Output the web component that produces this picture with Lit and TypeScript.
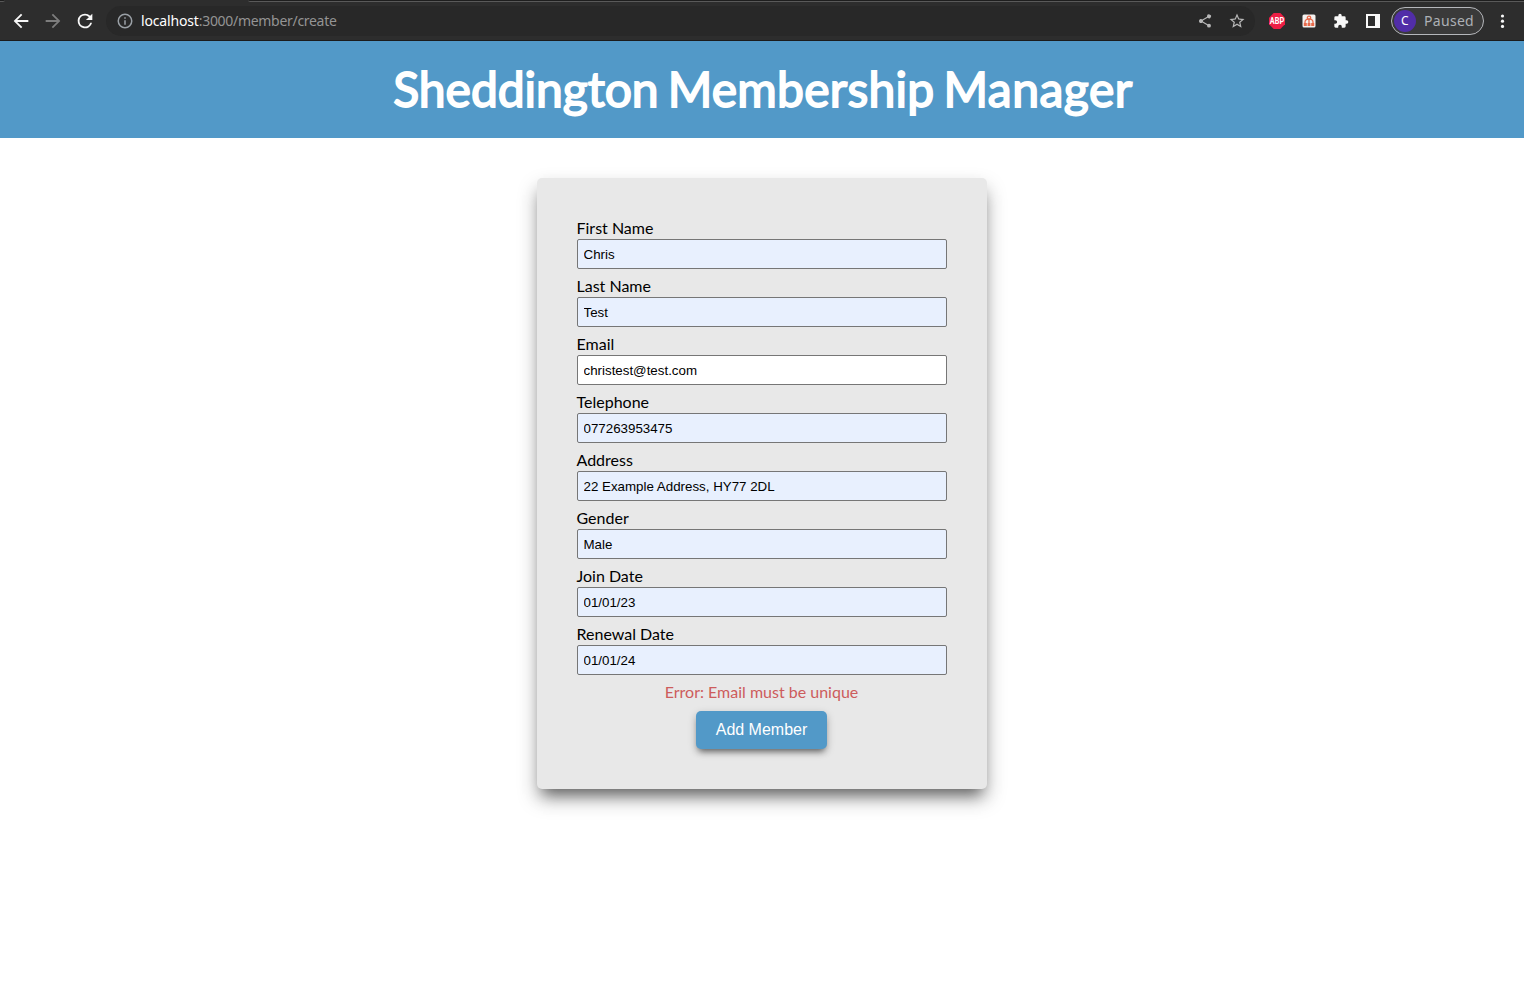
import { LitElement, html, css, svg } from "lit";
import { customElement } from "lit/decorators.js";

const FIELDS = [
  { label: "First Name", value: "Chris", filled: true },
  { label: "Last Name", value: "Test", filled: true },
  { label: "Email", value: "christest@test.com", filled: false },
  { label: "Telephone", value: "077263953475", filled: true },
  { label: "Address", value: "22 Example Address, HY77 2DL", filled: true },
  { label: "Gender", value: "Male", filled: true },
  { label: "Join Date", value: "01/01/23", filled: true },
  { label: "Renewal Date", value: "01/01/24", filled: true },
];

const PATHS = {
  back: "M20 11H7.83l5.59-5.59L12 4l-8 8 8 8 1.41-1.41L7.83 13H20v-2z",
  forward: "M12 4l-1.41 1.41L16.17 11H4v2h12.17l-5.58 5.59L12 20l8-8z",
  reload:
    "M17.65 6.35A7.96 7.96 0 0 0 12 4a8 8 0 1 0 7.73 10h-2.08A6 6 0 1 1 12 6c1.66 0 3.14.69 4.22 1.78L13 11h7V4l-2.35 2.35z",
  info: "M11 7h2v2h-2zm0 4h2v6h-2zm1-9a10 10 0 1 0 0 20 10 10 0 0 0 0-20zm0 18a8 8 0 1 1 0-16 8 8 0 0 1 0 16z",
  share:
    "M18 16.08c-.76 0-1.44.3-1.96.77L8.91 12.7a3.3 3.3 0 0 0 0-1.4l7.05-4.11A3 3 0 1 0 15 5c0 .24.04.47.09.7L8.04 9.81A3 3 0 1 0 6 15c.79 0 1.5-.31 2.04-.81l7.12 4.16c-.05.21-.08.43-.08.65a2.92 2.92 0 1 0 2.92-2.92z",
  star: "M22 9.24l-7.19-.62L12 2 9.19 8.63 2 9.24l5.46 4.73L5.82 21 12 17.27 18.18 21l-1.63-7.03L22 9.24zM12 15.4l-3.76 2.27 1-4.28-3.32-2.88 4.38-.38L12 6.1l1.71 4.04 4.38.38-3.32 2.88 1 4.28L12 15.4z",
  puzzle:
    "M20.5 11H19V7a2 2 0 0 0-2-2h-4V3.5a2.5 2.5 0 0 0-5 0V5H4a2 2 0 0 0-2 2v3.8h1.5a2.7 2.7 0 0 1 0 5.4H2V20c0 1.1.9 2 2 2h3.8v-1.5a2.7 2.7 0 0 1 5.4 0V22H17a2 2 0 0 0 2-2v-4h1.5a2.5 2.5 0 0 0 0-5z",
};

const icon = (name: keyof typeof PATHS, size: number) => html`
  <svg class="icon" width=${size} height=${size} viewBox="0 0 24 24">
    ${svg`<path d=${PATHS[name]} fill="currentColor"></path>`}
  </svg>
`;

@customElement("browser-bar")
export class BrowserBar extends LitElement {
  static styles = css`
    :host {
      display: block;
      font-family: "Noto Sans", "Open Sans", sans-serif;
    }
    .bar {
      box-sizing: border-box;
      height: 41px;
      display: flex;
      align-items: center;
      padding: 2px 11px 1px 10px;
      background: #2d2d2d;
      border-bottom: 1px solid #1b1b1b;
      position: relative;
    }
    .icon {
      display: block;
      flex: none;
    }
    .tabs {
      position: absolute;
      left: 0;
      right: 0;
      top: 0;
      height: 2px;
      display: flex;
      justify-content: space-between;
    }
    .edge {
      box-sizing: border-box;
      height: 2px;
      background: #1e1e1e;
      border-bottom: 1px solid #595959;
    }
    .edge.left {
      width: 5px;
      border-bottom-right-radius: 3px;
    }
    .edge.right {
      width: 1276px;
      border-bottom-left-radius: 3px;
    }
    .nav {
      display: flex;
      gap: 10px;
      color: #f8f8f8;
    }
    .dim {
      color: #7d7d7d;
    }
    .omnibox {
      box-sizing: border-box;
      flex: none;
      width: 1149px;
      height: 30px;
      margin-left: 10px;
      padding: 0 9px 0 10px;
      border-radius: 15px;
      background: #282828;
      display: flex;
      align-items: center;
      color: #9aa0a6;
    }
    .url {
      flex: 1;
      margin-left: 7px;
      font-size: 14px;
      line-height: 20px;
      color: #949494;
      white-space: nowrap;
    }
    .url span {
      display: inline-block;
      letter-spacing: -0.3px;
    }
    .url .host {
      color: #fff;
      letter-spacing: -0.16px;
    }
    .actions {
      display: flex;
      align-items: center;
      gap: 15px;
      color: #b8b8b8;
    }
    .extensions {
      display: flex;
      align-items: center;
      gap: 16px;
      margin-left: 14px;
      color: #f8f8f8;
    }
    .profile {
      box-sizing: border-box;
      width: 93px;
      height: 28px;
      margin-left: 10px;
      padding-left: 2px;
      display: flex;
      align-items: center;
      gap: 8px;
      border: 1px solid #b5b7bb;
      border-radius: 14px;
      background: #3a3a3a;
      color: #adb0b5;
      font-size: 14px;
      line-height: 20px;
      letter-spacing: 0.3px;
    }
    .avatar {
      width: 22px;
      height: 22px;
      border-radius: 50%;
      background: #512da8;
      color: #fff;
      font: 12px/22px "Noto Sans", sans-serif;
      text-align: center;
    }
    .abp {
      font: bold 8.4px Roboto, sans-serif;
    }
    .menu {
      margin-left: 10px;
      color: #f8f8f8;
    }
  `;

  render() {
    return html`
      <div class="bar">
        <div class="tabs"><div class="edge left"></div><div class="edge right"></div></div>
        <div class="nav">
          ${icon("back", 22)}
          <span class="dim">${icon("forward", 22)}</span>
          ${icon("reload", 22)}
        </div>
        <div class="omnibox">
          ${icon("info", 18)}
          <div class="url"><span class="host">localhost</span><span>:3000/member/create</span></div>
          <div class="actions">${icon("share", 16)}${icon("star", 18)}</div>
        </div>
        <div class="extensions">
          <svg class="icon" width="16" height="16" viewBox="0 0 16 16">
            <path d="M4.7 0h6.6L16 4.7v6.6L11.3 16H4.7L0 11.3V4.7z" fill="#ed1e45"></path>
            <text class="abp" x="0.8" y="11" fill="#fff" textLength="14.4" lengthAdjust="spacingAndGlyphs">ABP</text>
          </svg>
          <svg class="icon" width="16" height="16" viewBox="0 0 16 16">
            <rect x="1.5" y="1.5" width="13" height="13" rx="1.5" fill="#f4f1ef"></rect>
            <g fill="none" stroke="#e8694a" stroke-width="1.3">
              <circle cx="8" cy="4.8" r="1.7"></circle>
              <path d="M8 6.5v4M4 10.4V9a4 3.2 0 0 1 8 0v1.4"></path>
            </g>
            <g fill="#e8694a">
              <rect x="2.8" y="10" width="3" height="3"></rect>
              <rect x="6.6" y="10" width="2.8" height="3"></rect>
              <rect x="10.2" y="10" width="3" height="3"></rect>
            </g>
          </svg>
          ${icon("puzzle", 16)}
          <svg class="icon" width="16" height="16" viewBox="0 0 16 16">
            <path d="M1 1h14v14H1zM3 3v10h7V3z" fill="currentColor" fill-rule="evenodd"></path>
          </svg>
        </div>
        <div class="profile"><div class="avatar">C</div><span>Paused</span></div>
        <svg class="icon menu" width="16" height="16" viewBox="0 0 16 16">
          <g fill="currentColor">
            <circle cx="8.5" cy="3" r="1.6"></circle>
            <circle cx="8.5" cy="8.2" r="1.6"></circle>
            <circle cx="8.5" cy="13.4" r="1.6"></circle>
          </g>
        </svg>
      </div>
    `;
  }
}

@customElement("member-form")
export class MemberForm extends LitElement {
  static styles = css`
    :host {
      display: block;
    }
    .card {
      box-sizing: border-box;
      width: 450px;
      height: 611px;
      padding: 40px 40.5px 40px 39.5px;
      display: flex;
      flex-direction: column;
      background: #e8e8e8;
      border-radius: 5px;
      box-shadow: 0 10px 20px rgba(0, 0, 0, 0.25), 0 11px 14px -6px rgba(0, 0, 0, 0.5);
      font: 16px/20px Lato, sans-serif;
      color: #000;
    }
    .field {
      display: flex;
      flex-direction: column;
      flex: none;
      margin-bottom: 7px;
    }
    .label {
      height: 21px;
    }
    .input {
      box-sizing: border-box;
      width: 370px;
      height: 30px;
      margin: 0;
      padding: 1px 6px;
      border: 1px solid #767676;
      border-radius: 2px;
      background: #fff;
      color: #000;
      font: 13.333px "Liberation Sans", Arial, sans-serif;
      outline: none;
    }
    .input.filled {
      background: #e8f0fe;
    }
    .error {
      color: #cd5c5c;
      text-align: center;
      height: 29px;
    }
    .submit {
      align-self: center;
      width: 131px;
      height: 38px;
      padding: 0;
      border: 0;
      border-radius: 5px;
      background: #5299c8;
      color: #fff;
      font: 16px "Liberation Sans", Arial, sans-serif;
      box-shadow: 0 3px 8px rgba(0, 0, 0, 0.22), 0 5px 6px -3px rgba(0, 0, 0, 0.5);
    }
  `;

  render() {
    return html`
      <div class="card">
        ${FIELDS.map(
          (f) => html`
            <label class="field">
              <span class="label">${f.label}</span>
              <input class="input ${f.filled ? "filled" : ""}" .value=${f.value} spellcheck="false" />
            </label>
          `
        )}
        <div class="error">Error: Email must be unique</div>
        <button class="submit">Add Member</button>
      </div>
    `;
  }
}

@customElement("app-root")
export class AppRoot extends LitElement {
  static styles = css`
    :host {
      display: block;
      height: 1002px;
      overflow: hidden;
      background: #fff;
    }
    .header {
      box-sizing: border-box;
      height: 97px;
      padding: 20px 0 0 2px;
      background: #5299c8;
      text-align: center;
    }
    .title {
      margin: 0;
      font: 400 48px/56px Lato, sans-serif;
      -webkit-text-stroke: 1.8px #fff;
      color: #fff;
      white-space: nowrap;
      word-spacing: -3.2px;
    }
    .w1 {
      letter-spacing: -0.05px;
    }
    .w2 {
      letter-spacing: 0.25px;
    }
    .w3 {
      letter-spacing: 0.5px;
    }
    .main {
      display: flex;
      justify-content: center;
      padding-top: 40px;
    }
  `;

  render() {
    return html`
      <browser-bar></browser-bar>
      <header class="header">
        <h1 class="title"><span class="w1">Sheddington</span> <span class="w2">Membership</span> <span class="w3">Manager</span></h1>
      </header>
      <main class="main"><member-form></member-form></main>
    `;
  }
}
